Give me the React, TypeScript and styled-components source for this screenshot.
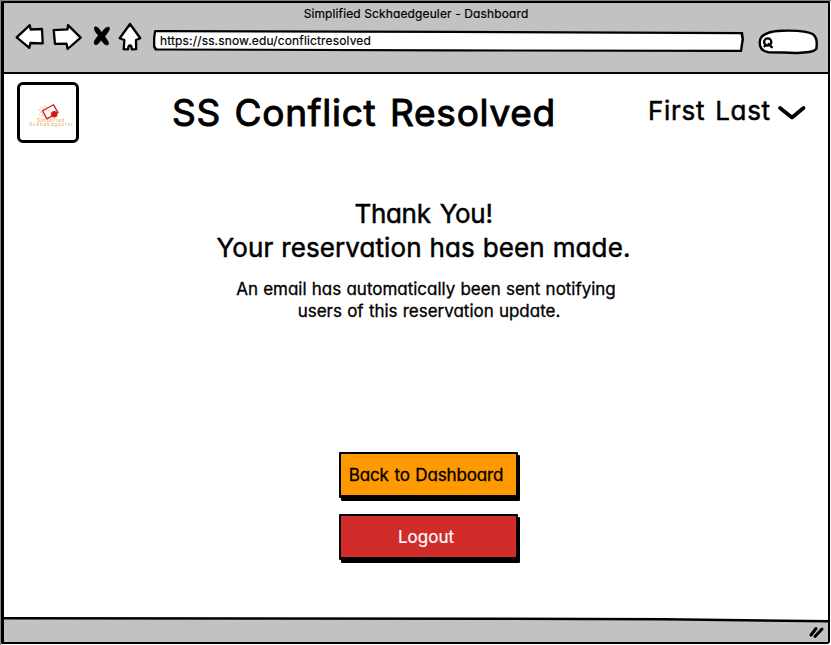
import React from "react";
import styled, { createGlobalStyle } from "styled-components";

const GlobalStyle = createGlobalStyle`
  * { box-sizing: border-box; }
  html, body { margin: 0; background: #fff; }
  body { width: 831px; height: 645px; overflow: hidden; }
`;

const BrowserWindow = styled.div`
  width: 831px;
  height: 645px;
  padding: 1px 1px 1px;
  background: linear-gradient(#7f857f 1px, transparent 1px), linear-gradient(90deg, #8a8a8a 1px, #fff 1px);
  color: #000;
  font-family: Inter, "Liberation Sans", sans-serif;
  font-feature-settings: "cv11" 1, "calt" 0;
`;

const Frame = styled.div`
  height: 643px;
  display: flex;
  flex-direction: column;
  border: solid #000;
  border-width: 2px 2px 2px 3px;
  border-radius: 1px 1px 3px 1px;
`;

const Chrome = styled.header`
  height: 71px;
  flex: none;
  background: #c2c2c2;
  border-bottom: 2px solid #000;
`;

const WindowTitle = styled.div`
  height: 22px;
  display: flex;
  justify-content: center;
  align-items: center;
`;

const Toolbar = styled.div`
  display: flex;
  align-items: flex-start;
  height: 40px;
`;

const Text = styled.span<{ $size: number; $spacing?: number; $word?: number; $stroke?: number }>`
  display: block;
  font-size: ${(p) => p.$size}px;
  line-height: 1;
  letter-spacing: ${(p) => p.$spacing ?? 0}px;
  word-spacing: ${(p) => p.$word ?? 0}px;
  -webkit-text-stroke: ${(p) => p.$stroke ?? 0}px currentColor;
  white-space: nowrap;
`;

const NavIcons = styled.svg`
  width: 130px;
  height: 34px;
  margin: -4px 0 0 9px;
  flex: none;
`;

const UrlField = styled.div`
  width: 591px;
  height: 22px;
  margin: 5px 0 0 10px;
  flex: none;
  display: grid;
  background: #000;
  clip-path: polygon(1px 1px, 2px 0, 50% 0.8px, 590px 2px, 591px 9px, 589px 22px, 50% 21.5px, 2px 20.5px, 0 17px, 0 8px);
`;

const UrlInner = styled.div`
  padding: 5px 0 0 7px;
  background: #fff;
  clip-path: polygon(3px 2.3px, 50% 3px, 587.5px 4.2px, 588.5px 9px, 587px 19.7px, 50% 19.3px, 4px 18.4px, 2.3px 16px, 2.3px 8px);
`;

const SearchBox = styled.svg`
  width: 62px;
  height: 28px;
  margin: 2px 0 0 13px;
  flex: none;
`;

const Page = styled.main`
  flex: 1;
  min-height: 0;
  background: #fff;
`;

const PageHeader = styled.div`
  height: 72px;
  display: flex;
  align-items: flex-start;
  padding: 8px 20px 0 13px;
`;

const LogoFrame = styled.div`
  width: 62px;
  height: 61px;
  flex: none;
  border: 3px solid #000;
  border-radius: 6px;
  overflow: hidden;
`;

const PageTitle = styled.h1`
  width: 384px;
  margin: 12px 0 0 93px;
  font-weight: 400;
  line-height: 1;
`;

const UserMenu = styled.div`
  display: flex;
  align-items: center;
  margin: 16px 0 0 92px;
  gap: 6px;
`;

const Chevron = styled.svg`
  width: 30px;
  height: 18px;
  margin-top: 4px;
`;

const Message = styled.section`
  display: flex;
  flex-direction: column;
  align-items: center;
  padding-top: 51px;
  padding-left: 15px;
`;

const Line = styled.div<{ $height: number; $shift?: number; $gap?: number }>`
  height: ${(p) => p.$height}px;
  display: flex;
  align-items: center;
  margin-top: ${(p) => p.$gap ?? 0}px;
  margin-left: ${(p) => p.$shift ?? 0}px;
`;

const Actions = styled.div`
  display: flex;
  flex-direction: column;
  align-items: flex-start;
  gap: 16px;
  margin: 130px 0 0 335px;
`;

const Button = styled.button<{ $bg: string; $fg: string }>`
  width: 179px;
  height: 46px;
  display: flex;
  align-items: center;
  justify-content: center;
  padding: 2px 5px 0 0;
  border: 2px solid #000;
  border-bottom-width: 3px;
  border-radius: 1px;
  background: ${(p) => p.$bg};
  color: ${(p) => p.$fg};
  box-shadow: 2px 3px 0 #000;
  font: inherit;
  font-feature-settings: inherit;
`;

const StatusBar = styled.footer`
  height: 25px;
  flex: none;
  background: #000;
  display: grid;
  clip-path: polygon(0 0, 60% 0.5px, 80% 1px, 100% 3px, 100% 100%, 0 100%);
`;

const StatusFill = styled.div`
  display: flex;
  justify-content: flex-end;
  padding: 8px 3px 0 0;
  background: #c2c2c2;
  clip-path: polygon(0 2.5px, 60% 3px, 80% 3.5px, 100% 5.5px, 100% 100%, 0 100%);
`;

function NavigationIcons() {
  return (
    <NavIcons viewBox="13 21 130 34" fill="#fff" stroke="#000" strokeWidth="2.3" strokeLinejoin="round" strokeLinecap="round">
      <path d="M16.7 37.3 29.8 25.2 30.6 29.5 42 29 42.7 43.3 30.4 43 29.3 47.8Z" />
      <path d="M53.7 30.2 67.6 29.4 68 25.1 80.7 37.6 67.6 49 66.5 43.7 55 43.8Z" />
      <path
        fill="#000"
        stroke="#000"
        strokeWidth="0.8"
        d="M95 27.1C97.8 25.8 100.4 30.5 101.6 32.8 103.5 29.8 106.6 26 109.3 27.5 110.3 29.6 106.9 33.4 104.8 36.6 106.3 39.1 110 43.3 108 44.8 105 45.7 102.7 42.3 101.1 39.8 99.3 42.5 96.6 46.2 94.4 44 93.4 41.4 96.3 38.2 98.3 35.5 96.2 32.6 93 29 95 27.1Z"
      />
      <path d="M130 24 140.3 38.2 136 40 136.2 49.2 131.8 49.4 131.4 46.5Q130 44.5 128.5 46.5L128 49.4 123.7 49.2 124.4 40 119.7 38.2Z" />
    </NavIcons>
  );
}

function SearchField() {
  return (
    <SearchBox viewBox="757 27 62 28" fill="none" stroke="#000" strokeWidth="2.4" strokeLinecap="round">
      <path fill="#fff" d="M759.8 42C760 35.5 767 31.2 782 30.7 797 30.2 808 31 813 34.3 816.5 37 817.3 43 816.3 49 813 52.8 806 52.3 795 53 785 52.2 776 52.2 768 52.2 762 50.8 759.4 47 759.8 42Z" />
      <circle cx="767.7" cy="42" r="3.6" strokeWidth="2.3" />
      <path strokeWidth="2.3" d="M768.5 44 771.8 47.2M764.5 46.2 766 45.4" />
    </SearchBox>
  );
}

function Logo() {
  return (
    <svg width="56" height="56" viewBox="20 85 56 56" fill="none" fontFamily="Inter, sans-serif">
      <g stroke="#efb265" strokeWidth="0.8" strokeDasharray="2 1.2">
        <circle cx="41" cy="109.5" r="1.7" />
        <circle cx="45" cy="107.5" r="1.6" />
        <circle cx="41" cy="114" r="1.7" />
        <circle cx="47" cy="114" r="4" />
      </g>
      <path d="M42.5 110.8 53.5 104.8 58 112.5 47 118.8Z" stroke="#d3191c" strokeWidth="1.3" />
      <circle cx="54.3" cy="114.2" r="3.2" fill="#d3191c" />
      <g fill="#e7932c">
        <text x="37" y="122.4" fontSize="4.4" textLength="27">Simplified</text>
        <text x="29.5" y="126.3" fontSize="4.2" textLength="43">Sckhaedgeuler</text>
      </g>
    </svg>
  );
}

export default function App() {
  return (
    <>
      <GlobalStyle />
      <BrowserWindow>
        <Frame>
          <Chrome>
            <WindowTitle>
              <Text $size={12} $spacing={0.12} $stroke={0.2}>Simplified Sckhaedgeuler - Dashboard</Text>
            </WindowTitle>
            <Toolbar>
              <NavigationIcons />
              <UrlField>
                <UrlInner>
                  <Text $size={12} $spacing={0.15} $stroke={0.2}>https://ss.snow.edu/conflictresolved</Text>
                </UrlInner>
              </UrlField>
              <SearchField />
            </Toolbar>
          </Chrome>
          <Page>
            <PageHeader>
              <LogoFrame><Logo /></LogoFrame>
              <PageTitle><Text $size={37} $spacing={0.75} $word={2.4} $stroke={1}>SS Conflict Resolved</Text></PageTitle>
              <UserMenu>
                <Text $size={26} $spacing={0.7} $word={2} $stroke={0.5}>First Last</Text>
                <Chevron viewBox="0 0 30 18" fill="none" stroke="#000" strokeWidth="3.8" strokeLinecap="round" strokeLinejoin="round">
                  <path d="M3 4 15 13.5 26.5 4" />
                </Chevron>
              </UserMenu>
            </PageHeader>
            <Message>
              <Line $height={34}><Text $size={26} $spacing={-0.3} $word={2} $stroke={0.5}>Thank You!</Text></Line>
              <Line $height={34}><Text $size={26} $spacing={0.1} $word={0.5} $stroke={0.5}>Your reservation has been made.</Text></Line>
              <Line $height={22} $shift={5} $gap={13}><Text $size={17} $spacing={-0.02} $word={0.5} $stroke={0.3}>An email has automatically been sent notifying</Text></Line>
              <Line $height={22} $shift={11}><Text $size={17} $spacing={-0.02} $word={0.5} $stroke={0.3}>users of this reservation update.</Text></Line>
            </Message>
            <Actions>
              <Button $bg="#ff9900" $fg="#000"><Text $size={17} $spacing={-0.15} $word={1} $stroke={0.3}>Back to Dashboard</Text></Button>
              <Button $bg="#d12b2a" $fg="#fff"><Text $size={17} $spacing={0} $stroke={0.2}>Logout</Text></Button>
            </Actions>
          </Page>
          <StatusBar>
            <StatusFill>
              <svg width="17" height="14" viewBox="0 0 17 14" stroke="#000" strokeWidth="3" strokeLinecap="round">
                <path d="M3 10 8 3.5M7 11.5 14 4" />
              </svg>
            </StatusFill>
          </StatusBar>
        </Frame>
      </BrowserWindow>
    </>
  );
}
